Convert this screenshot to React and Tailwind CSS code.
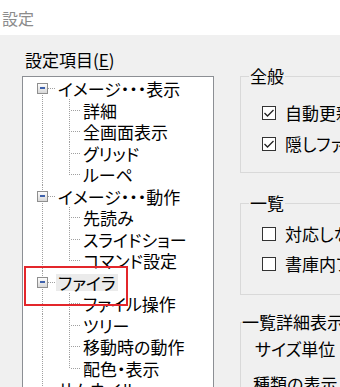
import React from "react";

const tree = [
  { label: "イメージ・・・表示", children: ["詳細", "全画面表示", "グリッド", "ルーペ"] },
  { label: "イメージ・・・動作", children: ["先読み", "スライドショー", "コマンド設定"] },
  { label: "ファイラ", selected: true, children: ["ファイル操作", "ツリー", "移動時の動作", "配色・表示"] },
  { label: "サムネイル", children: [] },
];

// flatten the tree into visible rows
const rows = [];
tree.forEach((node, n) => {
  rows.push({ type: "root", label: node.label, selected: node.selected, first: n === 0, expanded: node.children.length > 0 });
  node.children.forEach((c, i) => {
    rows.push({ type: "child", label: c, last: i === node.children.length - 1 });
  });
});

const DOT = "#a0a0a0";

const Connector = ({ row, h }) => {
  const cy = Math.floor(h / 2) + 0.5;
  if (row.type === "root") {
    return (
      <svg width="33" height={h} className="shrink-0">
        <defs>
          <linearGradient id="exp" x1="0" y1="0" x2="0" y2="1">
            <stop offset="0" stopColor="#ffffff" />
            <stop offset="1" stopColor="#d6d6d6" />
          </linearGradient>
        </defs>
        <line x1="19.5" y1={row.first ? cy : 0} x2="19.5" y2={h} stroke={DOT} strokeDasharray="1 1" shapeRendering="crispEdges" />
        <line x1="25" y1={cy} x2="33" y2={cy} stroke={DOT} strokeDasharray="1 1" shapeRendering="crispEdges" />
        {row.expanded && (
          <>
            <rect x="14.5" y={cy - 5} width="10" height="10" rx="1" fill="url(#exp)" stroke="#8f8f8f" shapeRendering="crispEdges" />
            <rect x="17" y={cy - 1.5} width="5" height="2" fill="#3f62ac" shapeRendering="crispEdges" />
          </>
        )}
      </svg>
    );
  }
  return (
    <svg width="58" height={h} className="shrink-0">
      <line x1="19.5" y1="0" x2="19.5" y2={h} stroke={DOT} strokeDasharray="1 1" shapeRendering="crispEdges" />
      <line x1="46.5" y1="0" x2="46.5" y2={row.last ? cy : h} stroke={DOT} strokeDasharray="1 1" shapeRendering="crispEdges" />
      <line x1="48" y1={cy} x2="58" y2={cy} stroke={DOT} strokeDasharray="1 1" shapeRendering="crispEdges" />
    </svg>
  );
};

const Check = ({ checked, label }) => (
  <div className="flex items-center gap-[9px] h-[20px] whitespace-nowrap">
    <svg width="14" height="14" className="shrink-0">
      <rect x="0.5" y="0.5" width="13" height="13" fill="#ffffff" stroke="#333333" shapeRendering="crispEdges" />
      {checked && <polyline points="2.5,7 5.5,10 11.5,4" fill="none" stroke="#222222" strokeWidth="1.3" />}
    </svg>
    <span className="leading-[20px]">{label}</span>
  </div>
);

export default function App() {
  return (
    <div className="relative w-[340px] h-[387px] overflow-hidden bg-[#f0f0f0] text-black text-[17px] font-['Noto_Sans_CJK_JP','Noto_Sans',sans-serif] [font-feature-settings:'palt']">
      <div className="h-[35px] bg-white flex items-center pl-[2px] text-[16px] text-[#8c8c8c]">設定</div>

      <div className="flex">
        <div className="ml-[22px] w-[192px] shrink-0">
          <div className="pt-[15px] pl-[3px] h-[41px] leading-[20px] whitespace-nowrap">
            設定項目(<span className="underline underline-offset-2">E</span>)
          </div>
          <div className="h-[330px] bg-white border border-[#8c8f94] pt-[1px] overflow-hidden">
            {rows.map((row, i) => {
              const h = i % 2 === 0 ? 21 : 22;
              return (
                <div key={i} className={`flex items-center whitespace-nowrap ${i % 2 === 0 ? "h-[21px]" : "h-[22px]"}`}>
                  <Connector row={row} h={h} />
                  <span className={`inline-block px-[2px] h-[17px] leading-[17px] ${row.selected ? "bg-[#ebebeb]" : ""}`}>
                    {row.label}
                  </span>
                </div>
              );
            })}
          </div>
        </div>

        <div className="ml-[26px] pt-[31px] w-[140px] shrink-0">
          <fieldset className="border border-[#d9d9d9] w-[140px] pb-[18px]">
            <legend className="ml-[8px] px-[1px] leading-[20px] whitespace-nowrap">全般</legend>
            <div className="pl-[21px] pt-[17px]">
              <Check checked label="自動更新を行う" />
            </div>
            <div className="pl-[21px] mt-[11px]">
              <Check checked label="隠しファイルを表示" />
            </div>
          </fieldset>

          <fieldset className="mt-[20px] border border-[#d9d9d9] w-[140px] pb-[20px]">
            <legend className="ml-[8px] px-[1px] leading-[20px] whitespace-nowrap">一覧</legend>
            <div className="pl-[21px] pt-[11px]">
              <Check label="対応しないファイルも表示" />
            </div>
            <div className="pl-[21px] mt-[10px]">
              <Check label="書庫内ファイルを表示" />
            </div>
          </fieldset>

          <fieldset className="mt-[17px] border border-[#d9d9d9] w-[140px] pb-[20px]">
            <legend className="ml-[1px] leading-[20px] whitespace-nowrap">一覧詳細表示</legend>
            <div className="pl-[14px] pt-[7px] h-[27px] leading-[20px] whitespace-nowrap">サイズ単位</div>
            <div className="pl-[12px] mt-[15px] leading-[20px] whitespace-nowrap">種類の表示</div>
          </fieldset>
        </div>
      </div>

      <div className="absolute left-[24px] top-[266px] w-[104px] h-[40px] border-2 border-[#e3262b]" />
    </div>
  );
}
